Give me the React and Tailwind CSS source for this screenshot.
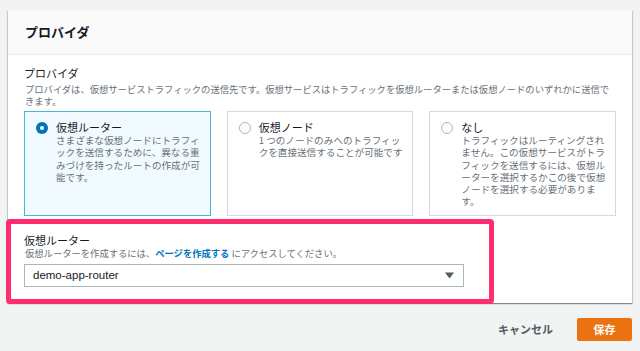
import React from "react";

const jp = { fontFamily: '"Noto Sans CJK JP", "Noto Sans", sans-serif' };

function Radio({ checked }) {
  if (checked) {
    return (
      <span className="mt-[2px] flex h-[12px] w-[12px] shrink-0 items-center justify-center rounded-full bg-[#0073bb]">
        <span className="h-[4px] w-[4px] rounded-full bg-white" />
      </span>
    );
  }
  return <span className="mt-[2px] block h-[12px] w-[12px] shrink-0 rounded-full border border-[#aab7b8] bg-white" />;
}

function Card({ checked, title, desc }) {
  return (
    <div
      className={
        "flex gap-[8px] border pl-[11px] pr-[6px] pt-[8px] " +
        (checked ? "border-[#44b9d6] bg-[#f1faff]" : "border-[#d5dbdb] bg-white")
      }
    >
      <Radio checked={checked} />
      <div className="min-w-0 flex-1">
        <div className="text-[11px] leading-[14px] text-[#16191f]">{title}</div>
        <div className="text-[9.6px] leading-[12.3px] text-[#687078] [line-break:loose]">{desc}</div>
      </div>
    </div>
  );
}

export default function App() {
  return (
    <div className="relative h-[351px] w-[640px] overflow-hidden bg-[#f2f3f3] px-[8px] pt-[10px]" style={jp}>
      <div className="h-[293px] bg-white shadow-[0_1px_1px_0_rgba(0,28,36,0.3),1px_1px_1px_0_rgba(0,28,36,0.15),-1px_1px_1px_0_rgba(0,28,36,0.15)]">
        <div className="flex h-[45px] items-center border-b border-[#eaeded] bg-[#fafafa] px-[17px]">
          <h2 className="text-[13px] font-bold text-[#16191f]">プロバイダ</h2>
        </div>
        <div className="px-[16px] pt-[11px]">
          <div className="text-[11px] leading-[14px] text-[#16191f]">プロバイダ</div>
          <div className="mt-[3px] pl-[1px] text-[9.3px] leading-[12px] text-[#687078] [line-break:loose]">
            プロバイダは、仮想サービストラフィックの送信先です。仮想サービスはトラフィックを仮想ルーターまたは仮想ノードのいずれかに送信できます。
          </div>
          <div className="mt-[4px] grid h-[105px] grid-cols-3 gap-[16px]">
            <Card
              checked
              title="仮想ルーター"
              desc="さまざまな仮想ノードにトラフィックを送信するために、異なる重みづけを持ったルートの作成が可能です。"
            />
            <Card title="仮想ノード" desc="1 つのノードのみへのトラフィックを直接送信することが可能です" />
            <Card
              title="なし"
              desc="トラフィックはルーティングされません。この仮想サービスがトラフィックを送信するには、仮想ルーターを選択するかこの後で仮想ノードを選択する必要があります。"
            />
          </div>
          <div className="mt-[17px] text-[11px] leading-[14px] text-[#16191f]">仮想ルーター</div>
          <div className="pl-[1px] text-[9.3px] leading-[12px] text-[#687078]">
            仮想ルーターを作成するには、<a className="font-bold text-[#0073bb]">ページを作成する</a> にアクセスしてください。
          </div>
          <div className="mt-[5px] flex h-[23px] w-[440px] items-center justify-between border border-[#aab7b8] bg-white pl-[8px] pr-[9px]">
            <span className="text-[11.5px] text-[#16191f]" style={{ fontFamily: '"Liberation Sans", Arial, sans-serif' }}>
              demo-app-router
            </span>
            <svg width="9" height="7" viewBox="0 0 9 7">
              <path d="M0 0.5 H9 L4.5 6.5 Z" fill="#545b64" />
            </svg>
          </div>
        </div>
      </div>
      <div className="mt-[15px] flex items-center justify-end gap-[24px]">
        <button className="text-[11px] font-bold text-[#545b64]">キャンセル</button>
        <button className="h-[23px] w-[55px] rounded-[2px] bg-[#ec7211] text-[11px] font-bold text-white">保存</button>
      </div>
      <div className="pointer-events-none absolute left-[6px] top-[219px] h-[85px] w-[488px] rounded-[4px] border-[5px] border-[#ff2d6e]" />
    </div>
  );
}
